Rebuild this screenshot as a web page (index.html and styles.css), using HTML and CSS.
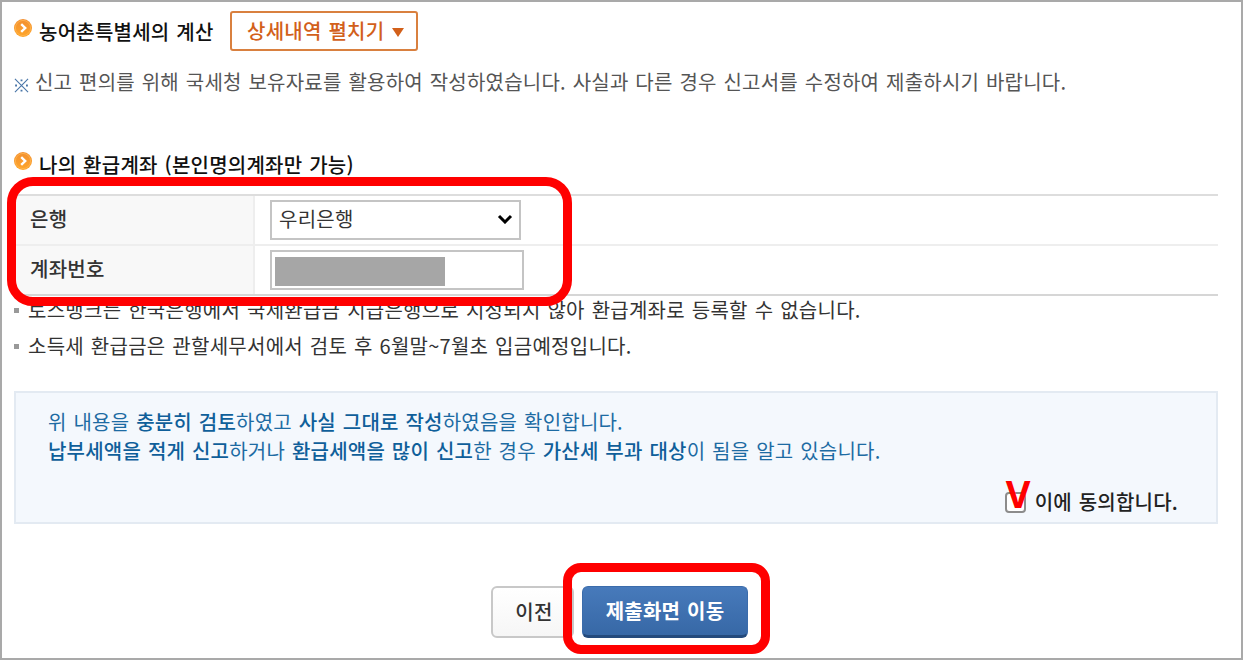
FILE: index.html
```
<!DOCTYPE html>
<html lang="ko">
<head>
    <meta charset="utf-8">
    <title>나의 환급계좌</title>
    <link rel="stylesheet" href="styles.css">
</head>
<body>
    <div class="page">
        <div class="section-title">
            <svg class="bullet" viewBox="0 0 18 18">
                <defs>
                    <linearGradient id="orange" x1="0" y1="0" x2="0" y2="1">
                        <stop offset="0" stop-color="#f28f30"/>
                        <stop offset="1" stop-color="#ffa62a"/>
                    </linearGradient>
                </defs>
                <circle cx="9" cy="9" r="9" fill="url(#orange)"/>
                <circle cx="9" cy="9" r="7.6" fill="none" stroke="#ffb650" stroke-width="0.8"/>
                <path d="M7.2 5.2L11.2 9L7.2 12.8" fill="none" stroke="#fff" stroke-width="2.4"/>
            </svg>
            <h2>농어촌특별세의 계산</h2>
            <button class="btn-toggle">상세내역 펼치기 <span class="arrow"></span></button>
        </div>
        <p class="guide"><svg class="mark" viewBox="0 0 16 16">
                <path d="M1 1L15 15M15 1L1 15" stroke="#4a76a8" stroke-width="1.2"/>
                <path d="M7 1.5h2v2h-2zM7 12.5h2v2h-2zM1.2 7h2v2h-2zM12.8 7h2v2h-2z" fill="#4a76a8"/>
            </svg><span>신고 편의를 위해 국세청 보유자료를 활용하여 작성하였습니다. 사실과 다른 경우 신고서를 수정하여 제출하시기 바랍니다.</span></p>

        <div class="section-title account-title">
            <svg class="bullet" viewBox="0 0 18 18">
                <circle cx="9" cy="9" r="9" fill="url(#orange)"/>
                <circle cx="9" cy="9" r="7.6" fill="none" stroke="#ffb650" stroke-width="0.8"/>
                <path d="M7.2 5.2L11.2 9L7.2 12.8" fill="none" stroke="#fff" stroke-width="2.4"/>
            </svg>
            <h2>나의 환급계좌 (본인명의계좌만 가능)</h2>
        </div>
        <div class="account">
            <div class="row">
                <div class="label">은행</div>
                <div class="value">
                    <div class="select">우리은행
                        <svg class="chevron" viewBox="0 0 16 10"><path d="M2 2L8 8L14 2" fill="none" stroke="#000" stroke-width="3"/></svg>
                    </div>
                </div>
            </div>
            <div class="row">
                <div class="label">계좌번호</div>
                <div class="value">
                    <div class="input"><div class="masked"></div></div>
                </div>
            </div>
            <div class="highlight highlight-account"></div>
        </div>
        <ul class="notes">
            <li>토스뱅크는 한국은행에서 국세환급금 지급은행으로 지정되지 않아 환급계좌로 등록할 수 없습니다.</li>
            <li>소득세 환급금은 관할세무서에서 검토 후 6월말~7월초 입금예정입니다.</li>
        </ul>

        <div class="agree-box">
            <p>위 내용을 <b>충분히 검토</b>하였고 <b>사실 그대로 작성</b>하였음을 확인합니다.</p>
            <p class="second"><b>납부세액을 적게 신고</b>하거나 <b>환급세액을 많이 신고</b>한 경우 <b>가산세 부과 대상</b>이 됨을 알고 있습니다.</p>
            <div class="agree">
                <span class="checkbox"><span class="check">V</span></span>
                <span>이에 동의합니다.</span>
            </div>
        </div>

        <div class="buttons">
            <button class="btn btn-prev">이전</button>
            <div class="submit-wrap">
                <button class="btn btn-submit">제출화면 이동</button>
                <div class="highlight highlight-submit"></div>
            </div>
        </div>
    </div>
</body>
</html>
```
FILE: styles.css
```
* {
    box-sizing: border-box;
}

body {
    margin: 0;
    font-family: 'Noto Sans CJK KR', sans-serif;
    font-size: 20px;
    line-height: 30px;
    letter-spacing: 0.24px;
    word-spacing: 1px;
    color: #333;
    background: #fff;
}

h2, p, ul {
    margin: 0;
    padding: 0;
}

button {
    font: inherit;
    letter-spacing: inherit;
    word-spacing: inherit;
}

.page {
    width: 1243px;
    height: 660px;
    padding: 9px 23px 0 12px;
    border: 2px solid #a9a9a9;
    overflow: hidden;
    white-space: nowrap;
}

.section-title {
    display: flex;
    height: 40px;
}

.section-title h2 {
    width: 176px;
    margin-left: 7px;
    padding-top: 6px;
    font-size: 20px;
    font-weight: 500;
    line-height: 30px;
    color: #111;
}

.bullet {
    width: 18px;
    height: 18px;
    margin-top: 8px;
}

.btn-toggle {
    display: flex;
    align-items: center;
    width: 188px;
    height: 40px;
    margin-left: 15px;
    padding: 0 0 0 15px;
    border: 2px solid #d9803f;
    border-radius: 3px;
    background: #fff;
    color: #d2601a;
    font-weight: 500;
}

.arrow {
    margin: 2px 0 0 8px;
    border: 6px solid transparent;
    border-top: 9px solid #d2601a;
    border-bottom: 0;
}

.guide {
    display: flex;
    height: 30px;
    margin-top: 16px;
    letter-spacing: 0.22px;
    color: #555;
}

.mark {
    width: 15px;
    height: 15px;
    margin: 11px 6px 0 0;
}

.account-title {
    height: 50px;
    margin-top: 47px;
}

.account-title h2 {
    padding-top: 6px;
}

.account {
    position: relative;
    height: 102px;
    border-top: 2px solid #ddd;
    border-bottom: 2px solid #d6d6d6;
}

.row {
    display: flex;
    height: 48px;
}

.row + .row {
    height: 50px;
    border-top: 2px solid #eee;
}

.label {
    width: 241px;
    padding: 8px 0 0 16px;
    border-right: 2px solid #eee;
    background: #f8f8f8;
    font-weight: 500;
}

.value {
    padding: 4px 0 0 15px;
}

.select, .input {
    display: flex;
    align-items: center;
    height: 40px;
    border: 2px solid #c4c4c4;
}

.select {
    justify-content: space-between;
    width: 251px;
    padding: 0 6px 2px 7px;
}

.input {
    width: 254px;
    padding-left: 3px;
}

.chevron {
    width: 16px;
    height: 10px;
}

.masked {
    width: 170px;
    height: 29px;
    margin-top: 2px;
    background: #a6a6a6;
}

.highlight {
    position: absolute;
    border: 9px solid #f00;
    pointer-events: none;
}

.highlight-account {
    top: -19px;
    left: -7px;
    width: 565px;
    height: 129px;
    border-radius: 26px;
}

.notes {
    list-style: none;
    letter-spacing: 0.26px;
    line-height: 28px;
    color: #333;
}

.notes li {
    display: flex;
    height: 36px;
}

.notes li::before {
    content: '';
    width: 5px;
    height: 5px;
    margin: 12px 9px 0 0;
    background: #999;
}

.agree-box {
    height: 133px;
    margin-top: 23px;
    padding: 14px 38px 0 32px;
    border: 2px solid #e3eaf2;
    background: #f4f8fd;
    letter-spacing: 0.22px;
    color: #1d6ba3;
}

.agree-box b {
    font-weight: 500;
    color: #0f5f9a;
}

.agree-box .second {
    margin-top: -1px;
}

.agree {
    display: flex;
    justify-content: flex-end;
    margin-top: 21px;
    color: #222;
    font-weight: 500;
}

.checkbox {
    position: relative;
    width: 21px;
    height: 21px;
    margin: 5px 9px 0 0;
    border: 2px solid #8c8c8c;
    border-radius: 4px;
    background: #fff;
}

.check {
    position: absolute;
    top: -16px;
    left: -1px;
    font-family: 'Noto Sans', sans-serif;
    font-size: 38px;
    font-weight: 700;
    line-height: 30px;
    color: #f00;
}

.buttons {
    display: flex;
    margin: 62px 0 0 477px;
}

.btn {
    height: 52px;
    padding: 0;
    border-radius: 6px;
    font-weight: 500;
}

.btn-prev {
    width: 83px;
    padding-left: 3px;
    border: 2px solid #c8c8c8;
    background: linear-gradient(#fff, #f6f6f6);
    color: #333;
}

.submit-wrap {
    position: relative;
    margin-left: 8px;
}

.btn-submit {
    width: 166px;
    border: 1px solid #3b6cab;
    border-bottom: 3px solid #244a7c;
    background: linear-gradient(#477abb, #3768a6);
    color: #fff;
    font-weight: 700;
}

.highlight-submit {
    top: -23px;
    left: -19px;
    width: 207px;
    height: 91px;
    border-radius: 18px;
}
```
